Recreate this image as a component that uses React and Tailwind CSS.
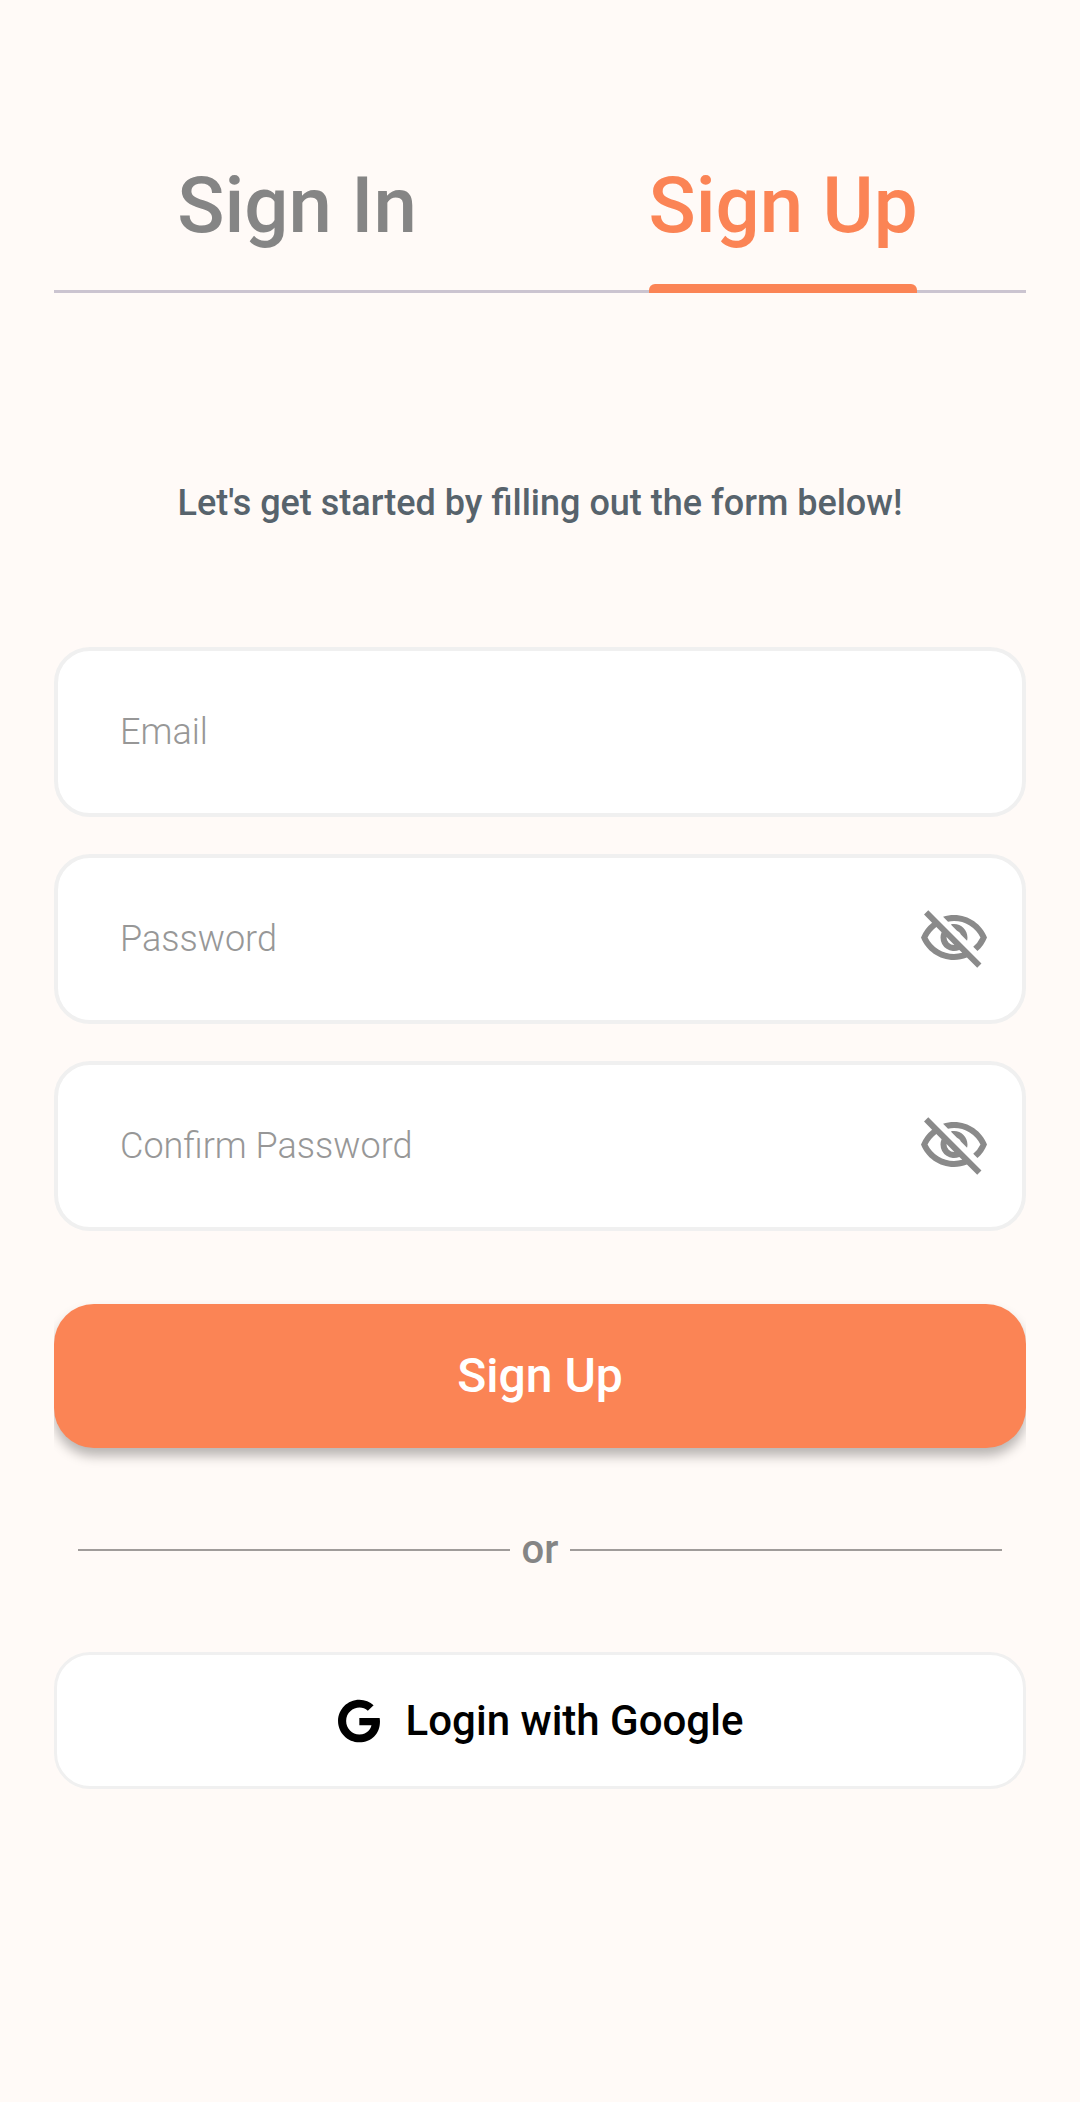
import React from 'react';
import { FaGoogle } from 'react-icons/fa';
import { MdOutlineVisibilityOff } from 'react-icons/md';

const Field = ({ placeholder, hasEye }) => (
  <div className="relative h-[170px] rounded-[36px] border-4 border-[#f0f0f0] bg-white">
    <input
      className="h-full w-full rounded-[32px] bg-transparent pl-[62px] pr-[110px] text-[36px] font-light text-black outline-none placeholder:text-[#979797]"
      placeholder={placeholder}
      readOnly
    />
    {hasEye && (
      <MdOutlineVisibilityOff className="absolute right-[32px] top-1/2 -translate-y-1/2 text-[#8a8a8a]" size={72} />
    )}
  </div>
);

export default function App() {
  return (
    <div className="min-h-[2102px] bg-[#fffaf7] px-[54px] pt-[160px] font-['Roboto',sans-serif]">
      <div className="relative flex h-[133px] border-b-[3px] border-[#cbc4d0]">
        <button className="flex h-[90px] flex-1 items-center justify-center text-[78px] font-medium text-[#858585]">
          Sign In
        </button>
        <button className="relative flex h-[133px] flex-1 justify-center text-[78px] font-medium text-[#fb8455]">
          <span className="flex h-[90px] items-center">Sign Up</span>
          <span className="absolute bottom-0 left-[109px] h-[9px] w-[268px] rounded-t-[6px] bg-[#fb8455]" />
        </button>
      </div>

      <p className="mt-[189px] text-center text-[36px] font-medium leading-[42px] text-[#57636c]">
        Let's get started by filling out the form below!
      </p>

      <div className="mt-[123px] flex flex-col gap-[37px]">
        <Field placeholder="Email" />
        <Field placeholder="Password" hasEye />
        <Field placeholder="Confirm Password" hasEye />
      </div>

      <div className="mt-[73px] overflow-x-clip">
        <button className="block h-[144px] w-full rounded-[40px] bg-[#fb8455] text-[48px] font-medium text-white shadow-[0_8px_12px_rgba(0,0,0,0.28)]">
          Sign Up
        </button>
      </div>

      <div className="mx-[24px] mt-[78px] flex items-center gap-[12px]">
        <div className="h-[2px] flex-1 bg-[#a09c9a]" />
        <span className="text-[40px] font-medium leading-[47px] text-[#858585]">or</span>
        <div className="h-[2px] flex-1 bg-[#a09c9a]" />
      </div>

      <button className="mt-[79px] flex h-[137px] w-full items-center justify-center gap-[25px] rounded-[36px] border-[3px] border-[#f0f0f0] bg-white text-[42px] font-medium text-black">
        <FaGoogle size={44} />
        Login with Google
      </button>
    </div>
  );
}
